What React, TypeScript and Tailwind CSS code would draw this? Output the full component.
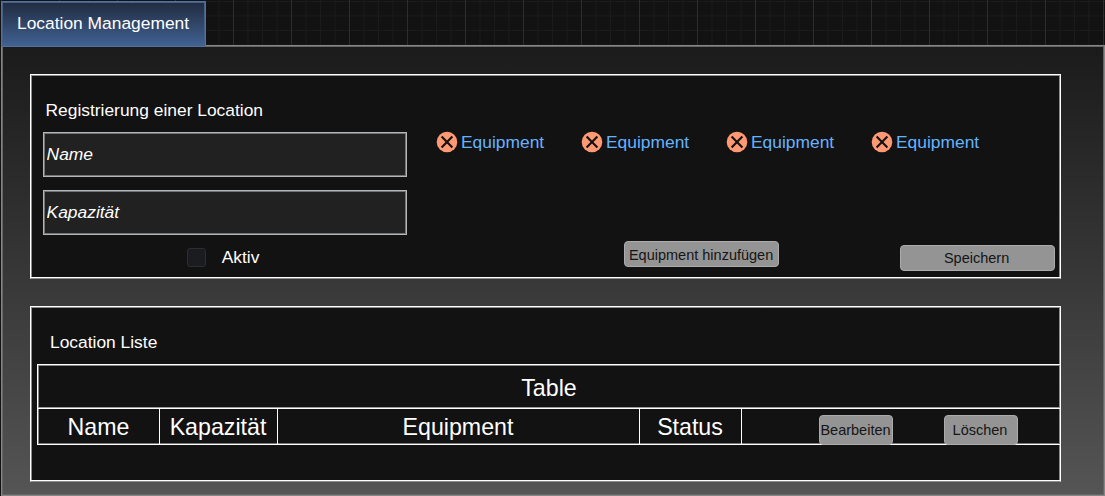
import React from "react";

const panel =
  "bg-[#121212] border border-white border-b-[#8c8c8c] shadow-[inset_0_-1px_0_#fff,inset_1px_1px_0_#8c8c8c,inset_-1px_0_0_#8c8c8c]";
const input =
  "block w-[364px] h-[45px] shrink-0 border border-[#b4b6b8] bg-[#212121] pl-[2.6px] pb-px text-[17.4px] italic text-white placeholder:text-white placeholder:opacity-100 outline-none shadow-[inset_0_0_0_1px_#717476]";
const button =
  "flex shrink-0 items-center justify-center whitespace-nowrap rounded-[4px] border-[1.5px] border-[#ababab] bg-[#949494] pr-px text-[14.5px] leading-none text-[#151515]";

function Equipment() {
  return (
    <div className="flex h-[22px] w-[145px] items-center">
      <svg width="22" height="22" viewBox="0 0 22 22" className="shrink-0">
        <circle cx="11" cy="11" r="10.3" fill="#ff9973" />
        <path d="M5.6 5.6 16.4 16.4M16.4 5.6 5.6 16.4" stroke="#121212" strokeWidth="2.1" fill="none" />
      </svg>
      <span className="ml-[3.4px] text-[17.4px] leading-[20px] text-[#66b2ff]">Equipment</span>
    </div>
  );
}

export default function App() {
  return (
    <div className="flex h-[496px] w-[1105px] flex-col overflow-hidden bg-[#121212] bg-[linear-gradient(90deg,#2d2d2d_1px,transparent_1px),linear-gradient(90deg,#1b1b1b_1px,transparent_1px),linear-gradient(#1b1b1b_1px,transparent_1px)] bg-[size:58px_58px,14.5px_14.5px,14.5px_14.5px] bg-[position:1px_0px,1px_0px,0px_1px] pl-px pt-px font-['Liberation_Sans',Arial,sans-serif] text-white">
      <div className="flex h-[44px] shrink-0">
        <div className="z-10 flex h-[46px] w-[205px] items-center border border-[#5270a0] bg-linear-to-b from-[#212c40] to-[#416294] pb-px pl-[15px] text-[17.4px] shadow-[inset_0_0_0_1px_#456089]">
          Location Management
        </div>
      </div>
      <main className="h-[451px] w-[1104px] border border-[#858585] bg-linear-to-b from-[#1b1b1b] to-[#555] pl-[28px] pt-[28px] shadow-[inset_0_0_0_1px_#666]">
        <section className={`${panel} flex h-[205px] w-[1031px] flex-col pl-[12px] pt-[24px]`}>
          <h2 className="h-[33px] pl-[2.5px] text-[17.4px] leading-[22px]">Registrierung einer Location</h2>
          <div className="flex">
            <div className="flex w-[392px] flex-col gap-[13px]">
              <input className={input} placeholder="Name" />
              <input className={input} placeholder="Kapazität" />
              <label className="flex items-center pl-[144px] text-[17.4px] leading-[19px]">
                <span className="mr-[15.7px] size-[19px] rounded-[3px] border border-[#2c2d33] bg-[#1b1c20]" />
                Aktiv
              </label>
            </div>
            <div className="flex w-[626px] flex-col justify-between">
              <div className="mt-[-1px] flex pl-px">
                <Equipment />
                <Equipment />
                <Equipment />
                <Equipment />
              </div>
              <div className="mb-[-4px] flex pl-[189.5px]">
                <button className={`${button} mb-[4px] h-[26px] w-[155px] pt-[2px]`}>Equipment hinzufügen</button>
                <button className={`${button} ml-[120.5px] mt-[3.5px] h-[26px] w-[155px] pt-[2px]`}>Speichern</button>
              </div>
            </div>
          </div>
        </section>
        <section className={`${panel} mt-[27px] flex h-[176px] w-[1031px] flex-col pl-[6px] pt-[24px]`}>
          <h2 className="h-[33px] pl-[13px] text-[17.4px] leading-[22px]">Location Liste</h2>
          <div className="h-[81px] w-[1023px] border-y border-l border-white text-[23.2px] shadow-[inset_1px_1px_0_#858585,inset_0_-1px_0_#777]">
            <div className="flex h-[43px] items-center justify-center border-b border-[#999] pt-[5px] shadow-[0_1px_0_#fff]">
              Table
            </div>
            <div className="flex h-[36px] pt-px text-center leading-[37px]">
              <div className="w-[122px] border-r border-white">Name</div>
              <div className="w-[118px] border-r border-white pr-px">Kapazität</div>
              <div className="w-[362px] border-r border-white pr-px">Equipment</div>
              <div className="w-[102px] border-r border-white pr-px">Status</div>
              <div className="flex pl-[77px] pt-[6px]">
                <button className={`${button} h-[30px] w-[74px]`}>Bearbeiten</button>
                <button className={`${button} ml-[50.5px] h-[30px] w-[74px]`}>Löschen</button>
              </div>
            </div>
          </div>
        </section>
      </main>
    </div>
  );
}
